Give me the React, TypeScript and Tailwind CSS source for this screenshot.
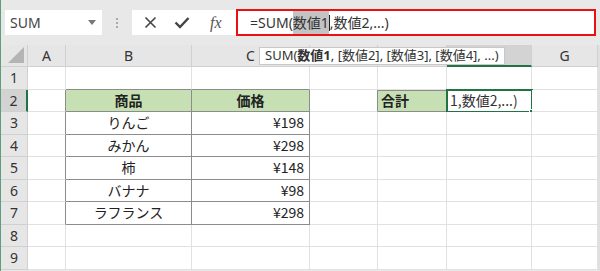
import React from "react";

const font = { fontFamily: '"Noto Sans", "Noto Sans CJK JP", sans-serif' };

const cols = [
  { k: "A", w: 38 },
  { k: "B", w: 126 },
  { k: "C", w: 118 },
  { k: "D", w: 68 },
  { k: "E", w: 69 },
  { k: "F", w: 85 },
  { k: "G", w: 66 },
];

const colW: Record<string, string> = {
  A: "w-[38px]",
  B: "w-[126px]",
  C: "w-[118px]",
  D: "w-[68px]",
  E: "w-[69px]",
  F: "w-[85px]",
  G: "w-[66px]",
};

type Cell = { text?: string; cls?: string; fill?: boolean };

const data: { name: string; price: string }[] = [
  { name: "りんご", price: "¥198" },
  { name: "みかん", price: "¥298" },
  { name: "柿", price: "¥148" },
  { name: "バナナ", price: "¥98" },
  { name: "ラフランス", price: "¥298" },
];

function rowCells(r: number): Record<string, Cell> {
  const cells: Record<string, Cell> = {};
  cols.forEach((c) => (cells[c.k] = { cls: "" }));
  if (r === 1) {
    cells.B.cls = "!border-b-[#8c8c8c]";
    cells.C.cls = "!border-b-[#8c8c8c]";
  }
  if (r >= 2 && r <= 7) {
    cells.A.cls = "!border-r-[#8c8c8c]";
    cells.B.cls = "!border-b-[#8c8c8c] !border-r-[#8c8c8c]";
    cells.C.cls = "!border-b-[#8c8c8c] !border-r-[#8c8c8c]";
  }
  if (r === 2) {
    cells.B = { text: "商品", fill: true, cls: cells.B.cls + " font-bold justify-center" };
    cells.C = { text: "価格", fill: true, cls: cells.C.cls + " font-bold justify-center" };
    cells.D.cls = "!border-r-[#8c8c8c]";
    cells.E = {
      text: "合計",
      fill: true,
      cls: "font-bold pl-[3px] !border-r-[#8c8c8c] !border-b-[#8c8c8c] shadow-[inset_0_1px_0_#8c8c8c]",
    };
  }
  if (r >= 3 && r <= 7) {
    const d = data[r - 3];
    cells.B = { text: d.name, cls: cells.B.cls + " justify-center" };
    cells.C = { text: d.price, cls: cells.C.cls + " justify-end pr-[5px]" };
  }
  return cells;
}

function Icons() {
  return (
    <div className="flex items-center h-full">
      <div className="w-[38px] flex justify-center">
        <svg width="13" height="13" viewBox="0 0 13 13">
          <path d="M1.5 1.5 L11.5 11.5 M11.5 1.5 L1.5 11.5" stroke="#444" strokeWidth="1.6" />
        </svg>
      </div>
      <div className="w-[28px] flex justify-center">
        <svg width="16" height="13" viewBox="0 0 16 13">
          <path d="M1.5 6.5 L6 11 L14.5 2" stroke="#444" strokeWidth="2.4" fill="none" />
        </svg>
      </div>
      <div className="w-[42px] flex justify-center">
        <span className="text-[16px] italic text-[#555]" style={{ fontFamily: '"Liberation Serif", serif' }}>
          fx
        </span>
      </div>
    </div>
  );
}

export default function App() {
  const rows = [1, 2, 3, 4, 5, 6, 7, 8, 9];
  return (
    <div
      className="w-[600px] h-[271px] overflow-hidden bg-[#e8e8e8] border-l border-[#5f9e7c] relative"
      style={font}
    >
      {/* top bar */}
      <div className="h-[45px] flex pt-[10px] relative">
        <div className="ml-[4px] w-[97px] h-[25px] bg-white flex items-center justify-between pl-[5px] pr-[6px]">
          <span className="text-[14px] text-[#444]">SUM</span>
          <svg width="8" height="5" viewBox="0 0 8 5">
            <path d="M0 0 L8 0 L4 5 Z" fill="#777" />
          </svg>
        </div>
        <div className="w-[30px] flex flex-col items-center justify-center gap-[2px] h-[25px]">
          <span className="w-[2px] h-[2px] bg-[#aaa]" />
          <span className="w-[2px] h-[2px] bg-[#aaa]" />
          <span className="w-[2px] h-[2px] bg-[#aaa]" />
        </div>
        <div className="w-[104px] h-[25px] bg-white">
          <Icons />
        </div>
        <div className="w-[360px] h-[27px] -mt-[1px] bg-white border-2 border-[#e81010] flex items-center pl-[12px] text-[14px] text-[#333]">
          <span>=SUM(</span>
          <span className="bg-[#c3c3c3] h-[23px] flex items-center">数値1</span>
          <span className="w-px h-[16px] bg-[#222]" />
          <span>,数値2,...)</span>
        </div>
      </div>

      {/* column header */}
      <div className="flex h-[22px]">
        <div className="w-[27px] h-full bg-[#e6e6e6] border-r border-b border-[#d0d0d0] relative">
          <svg className="absolute right-[3px] bottom-[3px]" width="16" height="16" viewBox="0 0 16 16">
            <path d="M16 0 L16 16 L0 16 Z" fill="#b4b4b4" />
          </svg>
        </div>
        {cols.map((c) => (
          <div
            key={c.k}
            className={`${colW[c.k]} h-full flex items-center justify-center text-[14px] text-[#333] border-r border-[#d0d0d0] ${
              c.k === "F" ? "bg-[#d3d3d3] border-b-2 border-b-[#217346]" : "bg-[#e6e6e6] border-b border-b-[#d0d0d0]"
            }`}
          >
            {c.k === "D" || c.k === "E" || c.k === "F" ? null : c.k}
          </div>
        ))}
      </div>

      {/* rows */}
      {rows.map((r) => {
        const cells = rowCells(r);
        return (
          <div key={r} className="flex h-[22.5px]">
            <div
              className={`w-[27px] h-full flex items-center justify-center text-[14px] text-[#333] border-b border-[#d0d0d0] ${
                r === 2 ? "bg-[#d3d3d3] border-r-2 border-r-[#217346]" : "bg-[#e6e6e6] border-r border-r-[#d0d0d0]"
              }`}
            >
              {r}
            </div>
            {cols.map((c) => {
              const cell = cells[c.k];
              const active = r === 2 && c.k === "F";
              return (
                <div
                  key={c.k}
                  className={`${colW[c.k]} h-full ${cell.fill ? "bg-[#c6e0b4]" : "bg-white"} flex items-center text-[14px] text-[#222] border-r border-b border-[#e1e1e1] relative ${cell.cls ?? ""}`}
                  style={{ fontFamily: '"Noto Sans CJK JP", "Noto Sans", sans-serif' }}
                >
                  {cell.text}
                  {active && (
                    <div className="absolute -left-[1px] -top-[1px] w-[87px] h-[24.5px] border-2 border-[#217346] flex items-center pl-[2px] text-[14px] text-[#333] bg-white">
                      1,数値2,...)
                      <span className="absolute -right-[3px] -bottom-[3px] w-[5px] h-[5px] bg-[#217346] border border-white" />
                    </div>
                  )}
                </div>
              );
            })}
          </div>
        );
      })}

      {/* tooltip */}
      <div
        className="absolute left-[258px] top-[47px] h-[18px] px-[5px] bg-white border border-[#c8c8c8] flex items-center text-[13px] text-[#333] whitespace-nowrap"
        style={{ fontFamily: '"Noto Sans", "Noto Sans CJK JP", sans-serif' }}
      >
        SUM(<b>数値1</b>, [数値2], [数値3], [数値4], ...)
      </div>

      {/* right edge */}
      <div className="absolute right-0 top-[45px] bottom-0 w-[2px] bg-[#e0e0e0]" />
    </div>
  );
}
